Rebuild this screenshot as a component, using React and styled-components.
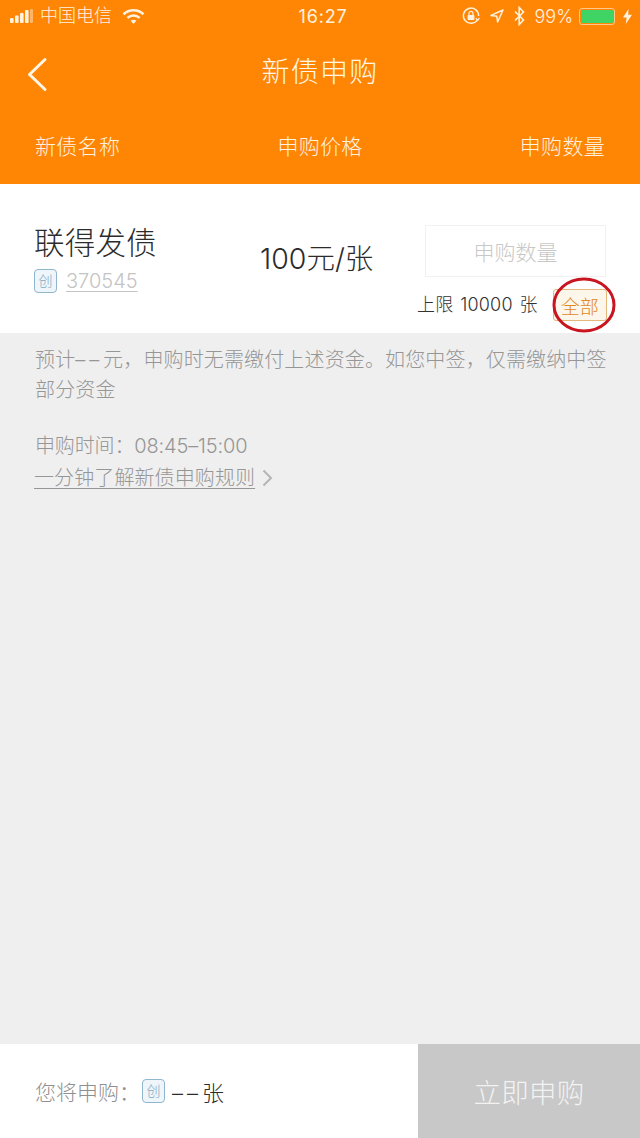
import React from "react";
import styled, { createGlobalStyle } from "styled-components";

const FONT = `Inter, "Noto Sans CJK SC", sans-serif`;

const Global = createGlobalStyle`
  html, body { margin: 0; padding: 0; background: #efefef; }
  * { box-sizing: border-box; }
  body { font-family: ${FONT}; }
`;

const Page = styled.div`
  width: 640px;
  height: 1138px;
  display: flex;
  flex-direction: column;
  background: #efefef;
  font-weight: 300;
`;

const Header = styled.header`
  height: 184px;
  flex: none;
  background: #ff8605;
  color: #fff;
  display: flex;
  flex-direction: column;
`;

const StatusBar = styled.div`
  height: 32px;
  padding: 0 8px 0 10px;
  display: grid;
  grid-template-columns: 1fr auto 1fr;
  align-items: center;
  font-size: 18px;
  color: #fff2e0;
`;

const StatusLeft = styled.div`
  display: flex;
  align-items: center;
`;

const Carrier = styled.span`
  margin-left: 7px;
  margin-right: 10px;
  font-size: 18px;
  line-height: 20px;
`;

const Time = styled.span`
  font-size: 18px;
  font-weight: 400;
  letter-spacing: 0.8px;
  margin-left: 4px;
`;

const StatusRight = styled.div`
  display: flex;
  align-items: center;
  justify-content: flex-end;
`;

const Percent = styled.span`
  margin: 0 6px 0 9px;
  font-size: 18px;
`;

const Battery = styled.span`
  width: 36px;
  height: 17px;
  border: 1px solid #ffc88a;
  border-radius: 3px;
  padding: 1px;
  margin-right: 8px;
  display: flex;
  &::before {
    content: "";
    flex: 1;
    background: #3fd463;
    border-radius: 1px;
  }
`;

const NavBar = styled.div`
  height: 79px;
  display: flex;
  align-items: center;
  justify-content: center;
  position: relative;
`;

const Back = styled.svg`
  position: absolute;
  left: 26px;
  top: 25px;
`;

const Title = styled.h1`
  margin: 0;
  font-size: 28px;
  font-weight: 300;
  letter-spacing: 1.2px;
  line-height: 40px;
  color: #fff6e8;
`;

const Columns = styled.div`
  display: flex;
  justify-content: space-between;
  margin-top: 21px;
  padding: 0 35px;
  font-size: 21px;
  line-height: 30px;
  color: #fff2e0;
  letter-spacing: 0.3px;
`;

const Card = styled.section`
  height: 149px;
  flex: none;
  background: #fff;
  display: grid;
  grid-template-columns: 225px 165px 1fr;
  padding-left: 35px;
`;

const NameCol = styled.div`
  padding-top: 37px;
`;

const Name = styled.div`
  font-size: 30.5px;
  line-height: 44px;
  color: #2c2c2c;
  font-weight: 300;
  letter-spacing: 0.2px;
  margin-left: -1px;
`;

const Code = styled.div`
  display: flex;
  align-items: center;
  gap: 9px;
  margin: 4px 0 0 -1px;
`;

const Tag = styled.span`
  width: 23px;
  height: 24px;
  flex: none;
  border: 1px solid #8fb6cc;
  border-radius: 4px;
  background: #eef6fb;
  color: #7fa8c0;
  font-size: 14px;
  line-height: 1;
  display: inline-flex;
  align-items: center;
  justify-content: center;
`;

const CodeText = styled.span`
  font-size: 20px;
  line-height: 24px;
  color: #c4c4c4;
  text-decoration: underline;
  text-underline-offset: 3px;
  text-decoration-thickness: 1px;
`;

const Price = styled.div`
  padding-top: 54px;
  font-size: 28.5px;
  line-height: 42px;
  color: #2c2c2c;
  white-space: nowrap;
`;

const QtyCol = styled.div`
  display: flex;
  flex-direction: column;
`;

const QtyInput = styled.div`
  width: 181px;
  height: 52px;
  margin-top: 41px;
  border: 1px solid #f1f1f1;
  color: #c8c8c8;
  font-size: 21px;
  display: flex;
  align-items: center;
  justify-content: center;
`;

const LimitRow = styled.div`
  display: flex;
  align-items: center;
  margin-top: 12px;
  margin-left: -8px;
`;

const Limit = styled.span`
  font-size: 18px;
  line-height: 30px;
  color: #333;
  letter-spacing: 0.2px;
  word-spacing: 1.5px;
  white-space: nowrap;
`;

const AllBtn = styled.span`
  margin-left: 15px;
  width: 54px;
  height: 32px;
  flex: none;
  border: 1px solid #e4b67a;
  border-radius: 3px;
  background: #fdf6ea;
  color: #e08a1e;
  font-size: 19px;
  display: flex;
  align-items: center;
  justify-content: center;
`;

const RedCircle = styled.svg`
  position: absolute;
  left: 552px;
  top: 277px;
`;

const Info = styled.main`
  flex: 1;
  padding: 12px 30px 0 35px;
  color: #969696;
  font-size: 20px;
  line-height: 30px;
`;

const Para = styled.p`
  margin: 0 0 26px;
  letter-spacing: 0.14px;
`;

const Hours = styled.div`
  line-height: 30px;
  letter-spacing: -0.15px;
`;

const RuleLink = styled.div`
  display: flex;
  align-items: center;
  gap: 7px;
  margin: 2px 0 0 -1px;
`;

const RuleText = styled.span`
  text-decoration: underline;
  text-decoration-thickness: 1px;
  text-underline-offset: 3px;
  letter-spacing: 0.1px;
`;

const Footer = styled.footer`
  height: 94px;
  flex: none;
  background: #fff;
  display: flex;
`;

const Summary = styled.div`
  flex: 1;
  display: flex;
  align-items: center;
  padding-left: 35px;
  font-size: 21px;
  color: #8f8f8f;
  white-space: nowrap;
`;

const SummaryTag = styled(Tag)`
  margin-left: 2px;
`;

const Count = styled.span`
  color: #2c2c2c;
  font-size: 22px;
  margin-left: 7px;
`;

const Submit = styled.button`
  width: 222px;
  border: 0;
  padding: 0;
  background: #c8c8c8;
  color: #f2f2f2;
  font-family: inherit;
  font-weight: 300;
  font-size: 27.5px;
  letter-spacing: 0.2px;
`;

const Screen = styled.div`
  position: relative;
  width: 640px;
  height: 1138px;
  overflow: hidden;
`;

export default function App() {
  return (
    <Screen>
      <Global />
      <Page>
        <Header>
          <StatusBar>
            <StatusLeft>
              <svg width="23" height="14" viewBox="0 0 23 14">
                <rect x="0" y="9" width="3.6" height="5" rx="1" fill="#fff2e0" />
                <rect x="5" y="6.5" width="3.6" height="7.5" rx="1" fill="#fff2e0" />
                <rect x="10" y="4" width="3.6" height="10" rx="1" fill="#fff2e0" />
                <rect x="15" y="1" width="3.6" height="13" rx="1" fill="#fff2e0" />
                <rect x="20" y="0" width="3" height="14" rx="1" fill="#ffb566" />
              </svg>
              <Carrier>中国电信</Carrier>
              <svg width="23" height="17" viewBox="0 0 23 17" fill="none">
                <path d="M1.5 6.2C7.2 0.9 15.8 0.9 21.5 6.2" stroke="#fff2e0" strokeWidth="2.6" />
                <path d="M5.4 9.9C9 6.7 14 6.7 17.6 9.9" stroke="#fff2e0" strokeWidth="2.6" />
                <path d="M8.6 12.8L11.5 16L14.4 12.8C12.6 11.3 10.4 11.3 8.6 12.8Z" fill="#fff2e0" />
              </svg>
            </StatusLeft>
            <Time>16:27</Time>
            <StatusRight>
              <svg width="18" height="18" viewBox="0 0 18 18" fill="none" style={{ marginRight: 10 }}>
                <path d="M15.6 12.5A7.6 7.6 0 1 1 16.6 9" stroke="#fff2e0" strokeWidth="1.5" />
                <path d="M13.8 11.2L15.8 13.4L17.4 11" stroke="#fff2e0" strokeWidth="1.2" />
                <rect x="5.6" y="8" width="6.8" height="5" rx="0.8" fill="#fff2e0" />
                <path d="M7 8V6.4a2 2 0 0 1 4 0V8" stroke="#fff2e0" strokeWidth="1.2" />
              </svg>
              <svg width="14" height="14" viewBox="0 0 14 14" fill="none" style={{ marginRight: 10 }}>
                <path d="M13 1L1 6.4L6.8 7.2L7.6 13Z" stroke="#fff2e0" strokeWidth="1.5" strokeLinejoin="round" />
              </svg>
              <svg width="11" height="20" viewBox="0 0 11 20" fill="none">
                <path d="M1 5.5L9.5 14L5.2 18.5V1.5L9.5 6L1 14.5" stroke="#fff2e0" strokeWidth="1.6" />
              </svg>
              <Percent>99%</Percent>
              <Battery />
              <svg width="9" height="15" viewBox="0 0 9 15">
                <path d="M5.5 0L0 8.5H3.6L2.8 15L9 5.8H5.2Z" fill="#fff2e0" />
              </svg>
            </StatusRight>
          </StatusBar>
          <NavBar>
            <Back width="22" height="36" viewBox="0 0 22 36" fill="none">
              <path d="M19 2.5L3.5 17.5L19 32.5" stroke="#fff6e8" strokeWidth="3" strokeLinecap="round" strokeLinejoin="round" />
            </Back>
            <Title>新债申购</Title>
          </NavBar>
          <Columns>
            <span>新债名称</span>
            <span>申购价格</span>
            <span>申购数量</span>
          </Columns>
        </Header>
        <Card>
          <NameCol>
            <Name>联得发债</Name>
            <Code>
              <Tag>创</Tag>
              <CodeText>370545</CodeText>
            </Code>
          </NameCol>
          <Price>100元/张</Price>
          <QtyCol>
            <QtyInput>申购数量</QtyInput>
            <LimitRow>
              <Limit>上限 10000 张</Limit>
              <AllBtn>全部</AllBtn>
            </LimitRow>
          </QtyCol>
        </Card>
        <Info>
          <Para>{"预计–\u2009–\u2009元，申购时无需缴付上述资金。如您中签，仅需缴纳中签部分资金"}</Para>
          <Hours>申购时间：08:45–15:00</Hours>
          <RuleLink>
            <RuleText>一分钟了解新债申购规则</RuleText>
            <svg width="11" height="18" viewBox="0 0 11 18" fill="none">
              <path d="M1.5 1.5L9 9L1.5 16.5" stroke="#b5b5b5" strokeWidth="2" />
            </svg>
          </RuleLink>
        </Info>
        <Footer>
          <Summary>
            您将申购：
            <SummaryTag>创</SummaryTag>
            <Count>{"–\u2009–\u2009张"}</Count>
          </Summary>
          <Submit>立即申购</Submit>
        </Footer>
      </Page>
      <RedCircle width="64" height="58" viewBox="0 0 64 58" fill="none">
        <ellipse cx="32" cy="28" rx="30" ry="26" stroke="#c8151f" strokeWidth="3" />
      </RedCircle>
    </Screen>
  );
}
